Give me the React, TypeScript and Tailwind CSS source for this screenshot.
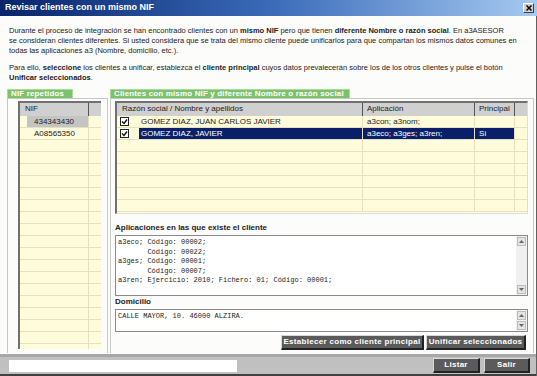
import React from "react"

const sans = { fontFamily: '"Liberation Sans", Arial, sans-serif' }
const mono = { fontFamily: '"Liberation Mono", "DejaVu Sans Mono", monospace' }

const leftRows = ["434343430", "A08565350", "", "", "", "", "", "", "", "", "", "", "", "", "", "", "", "", "", ""]

const rightRows = [
  { name: "GOMEZ DIAZ, JUAN CARLOS JAVIER", app: "a3con; a3nom;", main: "", sel: false, check: true },
  { name: "GOMEZ  DIAZ, JAVIER", app: "a3eco; a3ges; a3ren;", main: "Sí", sel: true, check: true },
  { name: "", app: "", main: "", sel: false, check: false },
  { name: "", app: "", main: "", sel: false, check: false },
  { name: "", app: "", main: "", sel: false, check: false },
  { name: "", app: "", main: "", sel: false, check: false },
  { name: "", app: "", main: "", sel: false, check: false },
  { name: "", app: "", main: "", sel: false, check: false },
]

function Check() {
  return (
    <div className="w-[9px] h-[9px] border border-[#222] bg-white flex items-center justify-center">
      <svg width="7" height="7" viewBox="0 0 7 7">
        <path d="M1 3.5 L3 5.5 L6 1.5" stroke="#111" strokeWidth="1.4" fill="none" />
      </svg>
    </div>
  )
}

function Tab({ children, w }: { children: React.ReactNode; w: string }) {
  return (
    <div className={`${w} h-[9px] bg-[#7cc26a] border-t border-l border-r border-[#a9dc9b] text-white font-bold text-[8px] leading-[8px] pl-[3px] tracking-[0.15px] whitespace-nowrap overflow-hidden`}>
      {children}
    </div>
  )
}

function ScrollArrow({ up }: { up: boolean }) {
  return (
    <div className="w-[9px] h-[9px] bg-[#e4e4e4] border border-[#bdbdbd] flex items-center justify-center">
      <svg width="5" height="3" viewBox="0 0 5 3">
        <path d={up ? "M0 3 L2.5 0 L5 3 Z" : "M0 0 L2.5 3 L5 0 Z"} fill="#666" />
      </svg>
    </div>
  )
}

function GrayButton({ children, w }: { children: React.ReactNode; w: string }) {
  return (
    <div className={`${w} h-[15px] bg-[#5b5b5b] border-t border-l border-[#d8d8d8] border-r-2 border-b-2 border-r-[#222] border-b-[#222] text-white font-bold text-[8px] tracking-[0.3px] flex items-center justify-center whitespace-nowrap overflow-hidden`}>
      {children}
    </div>
  )
}

export default function App() {
  return (
    <div className="w-[537px] h-[376px] flex flex-col bg-white text-[#222] overflow-hidden" style={sans}>
      {/* title bar */}
      <div className="h-[16px] shrink-0 flex items-center justify-between pl-[5px] pr-[3px] bg-gradient-to-r from-[#0a246a] via-[#3a6ab8] to-[#a6caf0]">
        <span className="text-white font-bold text-[9px]">Revisar clientes con un mismo NIF</span>
        <div className="w-[11px] h-[10px] bg-[#d4d0c8] border border-t-white border-l-white border-r-[#404040] border-b-[#404040] flex items-center justify-center">
          <svg width="6" height="6" viewBox="0 0 6 6">
            <path d="M0.5 0.5 L5.5 5.5 M5.5 0.5 L0.5 5.5" stroke="#000" strokeWidth="1.5" />
          </svg>
        </div>
      </div>

      <div className="flex-1 flex flex-col bg-[#fcfcfa] border-r border-[#606060]">
        {/* description */}
        <div className="h-[73px] shrink-0 pl-[9px] pt-[10px] text-[7.5px] leading-[10px] text-[#222] whitespace-nowrap">
          <p>
            Durante el proceso de integración se han encontrado clientes con un <b>mismo NIF</b> pero que tienen{" "}
            <b>diferente Nombre o razón social</b>. En a3ASESOR
            <br />
            se consideran clientes diferentes. Si usted considera que se trata del mismo cliente puede unificarlos para que compartan los mismos datos comunes en
            <br />
            todas las aplicaciones a3 (Nombre, domicilio, etc.).
          </p>
          <p className="mt-[7px]">
            Para ello, <b>seleccione</b> los clientes a unificar, establezca el <b>cliente principal</b> cuyos datos prevalecerán sobre los de los otros clientes y pulse el botón
            <br />
            <b>Unificar seleccionados</b>.
          </p>
        </div>

        {/* panels */}
        <div className="flex h-[264px] shrink-0 pl-[7px]">
          {/* left */}
          <div className="w-[101px] flex flex-col">
            <Tab w="w-[66px]">NIF repetidos</Tab>
            <div className="flex-1 border-t border-l border-r border-[#c8c8c8] pl-[10px] pr-[6px] pt-[2px]">
              <div className="h-[248px] border-l-2 border-t-2 border-[#707070] bg-[#fffcdc] flex flex-col overflow-hidden">
                <div className="h-[13px] shrink-0 flex bg-[#d0d0d0] text-[8px] leading-[12px]">
                  <div className="w-[69px] border-r border-[#555] pl-[5px]">NIF</div>
                  <div className="flex-1" />
                </div>
                {leftRows.map((r, i) => (
                  <div key={i} className="h-[12px] shrink-0 flex border-b border-[#e6e0bc] text-[8px] leading-[11px]">
                    <div className="w-[7px]" />
                    <div className={`w-[62px] pl-[7px] border-r border-[#e6e0bc] ${i === 0 ? "bg-[#c4c4c4]" : ""}`}>{r}</div>
                    <div className="flex-1" />
                  </div>
                ))}
              </div>
            </div>
          </div>

          {/* right */}
          <div className="w-[424px] ml-[2px] flex flex-col">
            <Tab w="w-[240px]">Clientes con mismo NIF y diferente Nombre o razón social</Tab>
            <div className="flex-1 border-t border-l border-r border-[#c8c8c8] pl-[4px] pr-[5px] pt-[2px] flex flex-col">
              {/* clients grid */}
              <div className="h-[113px] shrink-0 border-l-2 border-t-2 border-[#707070] border-r border-b border-r-[#ddd] border-b-[#ddd] bg-[#fffcdc] flex flex-col overflow-hidden">
                <div className="h-[13px] shrink-0 flex bg-[#d0d0d0] text-[8px] leading-[12px]">
                  <div className="w-[246px] border-r border-[#555] pl-[5px]">Razón social / Nombre y apellidos</div>
                  <div className="w-[112px] border-r border-[#555] pl-[4px]">Aplicación</div>
                  <div className="w-[40px] border-r border-[#555] pl-[4px]">Principal</div>
                  <div className="flex-1" />
                </div>
                {rightRows.map((r, i) => (
                  <div key={i} className="h-[12px] shrink-0 flex border-b border-[#e6e0bc] text-[8px] leading-[11px]">
                    <div className="w-[22px] flex items-center pl-[3px]">{r.check && <Check />}</div>
                    <div className={`w-[224px] pl-[2px] border-r border-[#e6e0bc] ${r.sel ? "bg-[#0a1f6a] text-white" : ""}`}>{r.name}</div>
                    <div className={`w-[112px] pl-[4px] border-r border-[#e6e0bc] ${r.sel ? "bg-[#0a1f6a] text-white" : ""}`}>{r.app}</div>
                    <div className={`w-[40px] pl-[4px] border-r border-[#e6e0bc] ${r.sel ? "bg-[#0a1f6a] text-white" : ""}`}>{r.main}</div>
                    <div className="flex-1" />
                  </div>
                ))}
              </div>

              <div className="mt-[9px] font-bold text-[8px] leading-[10px]">Aplicaciones en las que existe el cliente</div>
              <div className="h-[61px] mt-[2px] shrink-0 flex border border-[#8a8a8a] bg-white">
                <div className="flex-1 pl-[2px] pt-[2px] text-[7px] leading-[9.5px] whitespace-pre text-[#222]" style={mono}>
                  {"a3eco; Código: 00002;\n       Código: 00022;\na3ges; Código: 00001;\n       Código: 00007;\na3ren; Ejercicio: 2010; Fichero: 01; Código: 00001;"}
                </div>
                <div className="w-[11px] bg-[#f0f0f0] flex flex-col justify-between p-[1px]">
                  <ScrollArrow up />
                  <ScrollArrow up={false} />
                </div>
              </div>

              <div className="mt-[1px] font-bold text-[8px] leading-[10px]">Domicilio</div>
              <div className="h-[23px] mt-[2px] shrink-0 flex border border-[#8a8a8a] bg-white">
                <div className="flex-1 pl-[2px] pt-[2px] text-[7px] leading-[9px] whitespace-pre" style={mono}>
                  CALLE MAYOR, 10. 46000 ALZIRA.
                </div>
                <div className="w-[11px] bg-[#f0f0f0] flex flex-col justify-between p-[1px]">
                  <ScrollArrow up />
                  <ScrollArrow up={false} />
                </div>
              </div>

              <div className="flex justify-end gap-[2px] mt-[3px] pr-[2px]">
                <GrayButton w="w-[143px]">Establecer como cliente principal</GrayButton>
                <GrayButton w="w-[100px]">Unificar seleccionados</GrayButton>
              </div>
            </div>
          </div>
        </div>

        {/* bottom bar */}
        <div className="flex-1 mt-[1px] bg-[#c0c0c0] border-t-[3px] border-t-[#a8a8a8] border-b-2 border-b-[#404040] flex items-center pl-[9px] pr-[6px]">
          <div className="w-[228px] h-[12px] bg-white" />
          <div className="flex-1" />
          <div className="flex gap-[4px]">
            <GrayButton w="w-[47px]">Listar</GrayButton>
            <GrayButton w="w-[46px]">Salir</GrayButton>
          </div>
        </div>
      </div>
    </div>
  )
}
